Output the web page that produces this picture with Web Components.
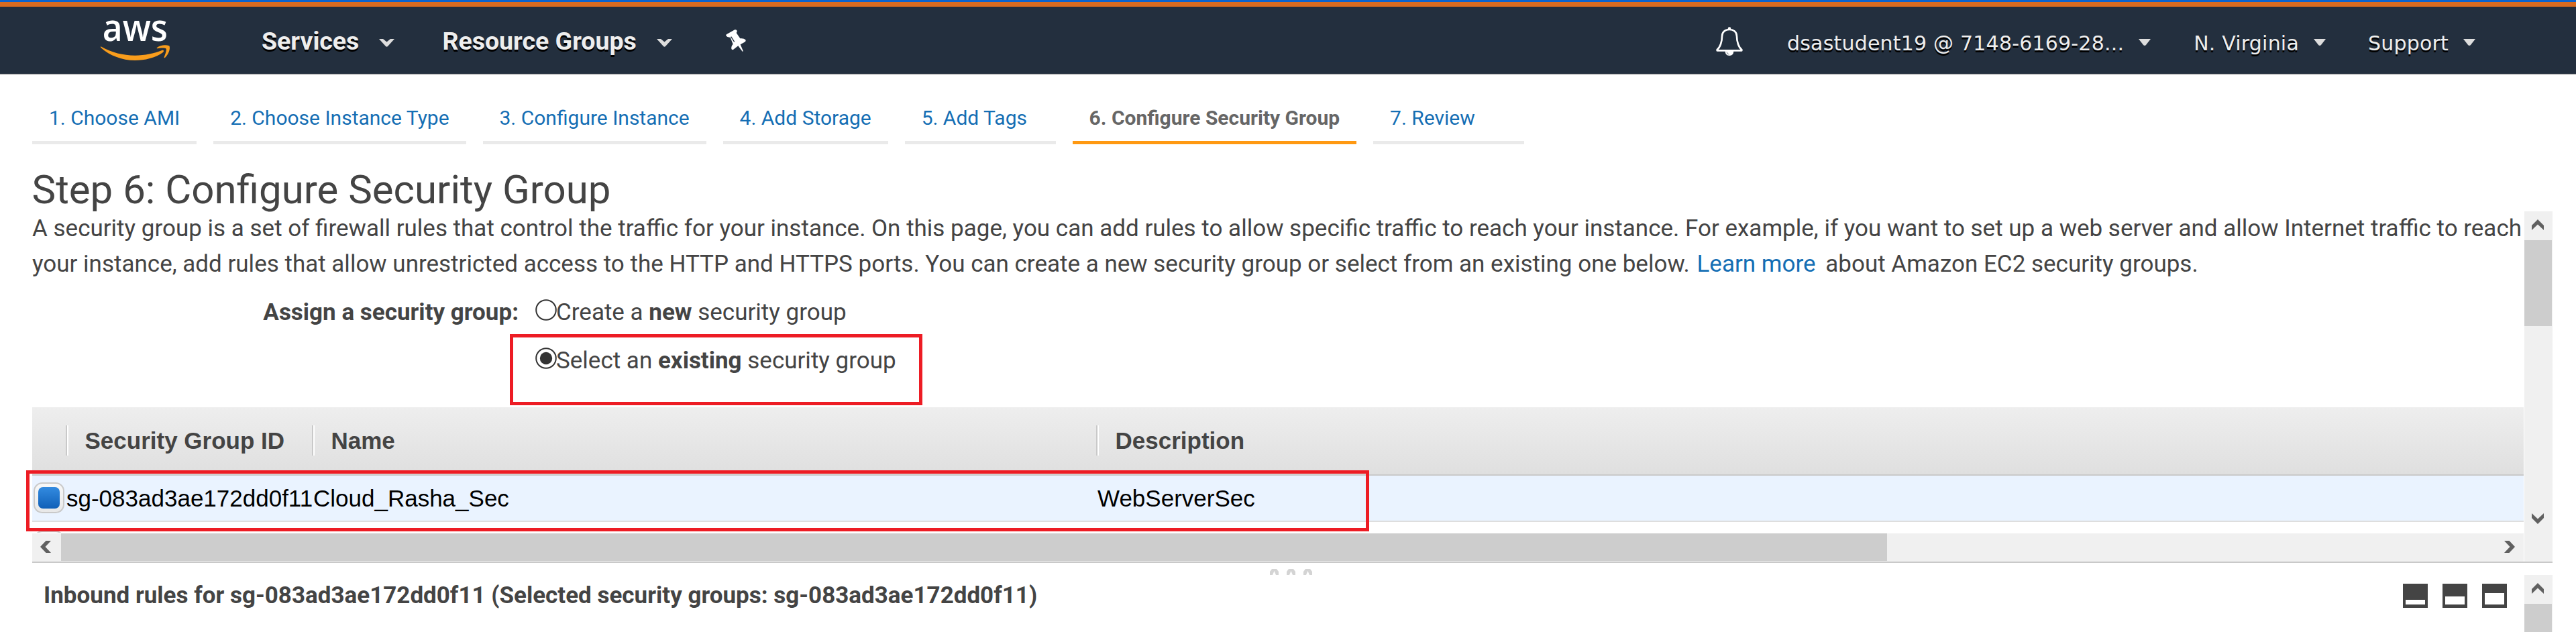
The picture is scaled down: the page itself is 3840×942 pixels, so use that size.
<!DOCTYPE html>
<html lang="en">
<head>
<meta charset="utf-8">
<title>Configure Security Group</title>
<style>
html,body{margin:0;background:#fff;overflow:hidden}
body{font-family:Roboto,"Open Sans",sans-serif;color:#444}
</style>
</head>
<body>
<launch-page></launch-page>
<script>
const define = (name, html) => customElements.define(name, class extends HTMLElement {
  connectedCallback() {
    if (this.shadowRoot) return;
    const t = document.createElement('template');
    t.innerHTML = typeof html === 'function' ? html(this) : html;
    this.attachShadow({mode: 'open'}).append(t.content.cloneNode(true));
  }
});

/* Logo: word and smile */
define('aws-logo', `<style>:host{display:block;width:160px;height:80px}svg{display:block;overflow:visible}</style>
<svg width="160" height="80" viewBox="0 0 480 240">
<text x="38" y="122" font-family="Open Sans,sans-serif" font-weight="600" font-size="170" fill="#fff" textLength="292" lengthAdjust="spacingAndGlyphs">aws</text>
<g fill="#f99d1c"><path d="M31 148C80 176 130 188 184 188C228 188 268 179 304 165C312 163 315 169 309 174C275 199 227 210 184 210C124 210 70 188 31 153Q28 148 31 148Z"/>
<path d="M281 154C295 142 320 139 337 145C344 158 332 186 318 198C314 200 313 197 315 193C320 180 326 163 323 158C317 153 297 155 284 157Q280 157 281 154Z"/></g></svg>`);

define('pin-icon', `<style>:host{display:block;width:80px;height:60px}svg{display:block}</style>
<svg width="80" height="60" viewBox="0 0 240 180"><path fill="#fff" d="M67 70Q65 65 70 63L106 43Q114 41 116 48Q117 53 113 57L130 82Q146 80 154 88Q157 95 150 98L131 109L143 137Q144 141 140 140L121 115L100 131Q93 135 91 128Q89 117 98 107L86 77Q72 78 67 70Z"/><path d="M89 74L104 97" stroke="#232f3e" stroke-width="4"/></svg>`);

define('bell-icon', `<style>:host{display:block;width:80px;height:60px}svg{display:block}</style>
<svg width="80" height="60" viewBox="0 0 240 180"><path d="M98 41Q98 31 105 31Q112 31 112 41Z" fill="#fff"/><path d="M50 136H160V132C147 122 138 98 138 72C138 52 123 42 105 42C87 42 72 52 72 72C72 98 63 122 50 132Z" fill="none" stroke="#fff" stroke-width="8" stroke-linejoin="round"/><path d="M86 138H124Q124 159 105 159Q86 159 86 138Z" fill="#fff"/><path d="M93 142Q94 152 104 153" fill="none" stroke="#232f3e" stroke-width="2"/></svg>`);

/* Menu label with its caret */
define('nav-menu', el => {
  const small = el.hasAttribute('small');
  return `<style>:host{display:flex;align-items:flex-start;height:100px;color:#eee;white-space:nowrap;text-shadow:0 2.5px 0 #000;
  font:${small ? '30px "DejaVu Sans",sans-serif' : 'bold 37.5px Roboto,sans-serif'};line-height:${small ? 109 : 102}px;letter-spacing:${small ? .2 : 0}px}
  svg{display:block;flex:none;margin:48px 0 0 ${small ? 22 : 30}px}</style><slot></slot>` + (small
  ? `<svg width="18" height="11" viewBox="0 0 18 11"><path d="M0 0H18L11 9Q9 11 7 9Z" fill="#ddd"/></svg>`
  : `<svg width="23" height="12" viewBox="0 0 23 12"><path d="M0 0H6L11.500 4.500L17 0H23L13 11Q11.500 12.500 10 11Z" fill="#ddd"/></svg>`);
});

define('top-bar', `<style>:host{display:flex;box-sizing:border-box;height:102px;background:#232f3e;border-bottom:2px solid #ccc;align-items:flex-start;padding-left:140px}
aws-logo{margin-top:10px}.pin{margin:20px 0 0 58px}.bell{margin:20px 41px 0 auto}
.a{margin-left:90px}.b{margin-left:71px}
.user{margin-right:64px}.region{margin-right:63px}.support{margin-right:150px}</style>
<aws-logo></aws-logo><nav-menu class="a">Services</nav-menu><nav-menu class="b">Resource Groups</nav-menu><pin-icon class="pin"></pin-icon>
<bell-icon class="bell"></bell-icon><nav-menu small class="user">dsastudent19 @ 7148-6169-28...</nav-menu><nav-menu small class="region">N. Virginia</nav-menu><nav-menu small class="support">Support</nav-menu>`);

define('wizard-step', `<style>:host{display:block;box-sizing:border-box;min-width:225px;height:103px;padding:30px 25px 0;border-bottom:5px solid #eaeaea;font-size:30px;line-height:68px;color:#146eb4;white-space:nowrap}
:host([active]){color:#666;font-weight:bold;border-color:#ff9912}</style><slot></slot>`);

define('wizard-steps', `<style>:host{display:flex;gap:24.900px;padding-left:48px}</style>
<wizard-step>1. Choose AMI</wizard-step><wizard-step>2. Choose Instance Type</wizard-step><wizard-step>3. Configure Instance</wizard-step><wizard-step>4. Add Storage</wizard-step><wizard-step>5. Add Tags</wizard-step><wizard-step active>6. Configure Security Group</wizard-step><wizard-step>7. Review</wizard-step>`);

/* Scroll bars with their arrow glyphs */
const up = 'M0 9L9 0L18 9V16L9 7.500L0 16Z', down = 'M0 0L9 8.500L18 0V7L9 16L0 7Z';
const left = 'M16 0H8.500L0 9L8.500 18H16L7.500 9Z', right = 'M0 0H7.500L16 9L7.500 18H0L8.500 9Z';
define('scroll-y', el => `<style>:host{display:flex;flex-direction:column;width:42px;background:#f0f0f0;overflow:hidden}
svg{display:block;margin:12px 0 15px 11px;flex:none}i{display:block;flex:none;width:41px;height:${el.getAttribute('thumb')}px;background:#cdcdcd}.d{margin:auto 0 56px 11px}</style>
<svg width="18" height="16"><path d="${up}" fill="#606060"/></svg><i></i>${el.hasAttribute('end') ? `<svg class="d" width="18" height="16"><path d="${down}" fill="#606060"/></svg>` : ''}`);
define('scroll-x', `<style>:host{display:flex;height:42px;background:#f0f0f0}
svg{display:block;margin:11px 15px 0 12px}i{display:block;width:2722px;height:41px;background:#cdcdcd}.r{margin:11px 13px 0 auto}</style>
<svg width="16" height="18"><path d="${left}" fill="#606060"/></svg><i></i><svg class="r" width="16" height="18"><path d="${right}" fill="#606060"/></svg>`);

define('radio-option', el => `<style>:host{display:flex;align-items:center;font-size:35px;line-height:72px;white-space:nowrap}
svg{display:block;margin:0 -1px 8px 0}</style>
<svg width="32" height="32"><circle cx="16" cy="16" r="14.800" fill="#fff" stroke="#333" stroke-width="2"/>${el.hasAttribute('checked') ? '<circle cx="16" cy="16" r="9.200" fill="#333"/>' : ''}</svg><span><slot></slot></span>`);

define('assign-form', `<style>:host{display:grid;box-sizing:content-box;grid-template-columns:725px auto;column-gap:25px;padding-top:10px;height:177px;align-content:start}
b{font-size:35px;line-height:72px;text-align:right}radio-option b{text-align:left}
.pick{position:relative;grid-column:2;justify-self:start}.mark{position:absolute;left:-38px;top:-4px;width:605px;height:96px;border:5px solid #ed1c24}</style>
<b>Assign a security group:</b><radio-option>Create a <b>new</b> security group</radio-option>
<div class="pick"><radio-option checked>Select an <b>existing</b> security group</radio-option><div class="mark"></div></div>`);

define('check-box', `<style>:host{display:flex;box-sizing:border-box;width:46px;height:46px;border:2px solid #c9c9c9;border-radius:13px;background:linear-gradient(#f8f8f8,#e8e8e8);align-items:center;justify-content:center}
i{width:32px;height:32px;border-radius:7px;background:linear-gradient(#338be0,#1060b8)}</style><i></i>`);

define('group-table', `<style>:host{display:block;position:relative;height:188px}
.h,.r{display:grid;grid-template-columns:50px 367px 1169px 1fr;font-family:"Liberation Sans",Arial,sans-serif;font-size:35px;white-space:nowrap}
.h{height:100px;background:linear-gradient(#eee,#dfdfdf);border-bottom:2px solid #c9c9c9;font-weight:bold}
.h span{margin-top:27px;height:45px;padding-left:26.500px;border-left:2px solid #c9c9c9;box-shadow:inset 2px 0 #fff;line-height:46px}
.r{height:67px;background:#eaf3ff;border-bottom:2px solid #dedede;line-height:68px;color:#000}
.r span{padding-left:2px}.r .id{padding-left:1px}.r .c{padding:10px 0 0 2px}
.n{height:16px;overflow:hidden}.n check-box{margin:13px 0 0 2px}
.mark{position:absolute;left:-9px;top:94px;width:1992px;height:81px;border:5px solid #ed1c24}</style>
<div class="h"><div></div><span>Security Group ID</span><span>Name</span><span>Description</span></div>
<div class="r"><div class="c"><check-box></check-box></div><span class="id">sg-083ad3ae172dd0f11</span><span>Cloud_Rasha_Sec</span><span>WebServerSec</span></div>
<div class="n"><check-box></check-box></div><div class="mark"></div>`);

define('group-panel', `<style>:host{display:grid;grid-template-columns:3714px 42px;column-gap:1px;height:522px;border-bottom:2px solid #c9c9c9;margin-left:48px;width:3757px}
p{margin:0;font-size:35px;line-height:52.500px;height:105px;white-space:nowrap}a{color:#146eb4;padding:0 6px 0 2px}
.m{display:flex;flex-direction:column}assign-form{height:177px}</style>
<div class="m"><p>A security group is a set of firewall rules that control the traffic for your instance. On this page, you can add rules to allow specific traffic to reach your instance. For example, if you want to set up a web server and allow Internet traffic to reach<br>your instance, add rules that allow unrestricted access to the HTTP and HTTPS ports. You can create a new security group or select from an existing one below. <a>Learn more</a> about Amazon EC2 security groups.</p>
<assign-form></assign-form><group-table></group-table><scroll-x></scroll-x></div>
<scroll-y thumb="128" end></scroll-y>`);

define('split-handle', `<style>:host{display:flex;gap:12px;height:18px;padding-left:1893px;align-items:flex-end;box-sizing:border-box}svg{display:block}</style>` +
`<svg width="13" height="10"><path d="M0 10V5L3 1H10L13 5V10H9L6.500 4L4 10Z" fill="#d4d4d4"/></svg>`.repeat(3));

define('pane-icon', el => `<style>:host{display:flex;box-sizing:border-box;width:37px;height:36px;background:#444;padding:0 4px 5px;align-items:flex-end}
i{width:100%;height:${el.getAttribute('open-height')}px;background:#fff}</style><i></i>`);

define('rules-panel', `<style>:host{display:grid;grid-template-columns:3698px 42px;height:85px;margin-left:65px;overflow:hidden}
div{display:flex;align-items:center;height:62px;gap:22px;padding-right:26px}h2{margin:0 auto 0 0;font-size:35px;line-height:62px;white-space:nowrap}scroll-y{height:85px}</style>
<div><h2>Inbound rules for sg-083ad3ae172dd0f11 (Selected security groups: sg-083ad3ae172dd0f11)</h2>
<pane-icon open-height="7"></pane-icon><pane-icon open-height="12"></pane-icon><pane-icon open-height="17"></pane-icon></div><scroll-y thumb="200"></scroll-y>`);

define('launch-page', `<style>:host{display:block;width:3840px;height:942px;overflow:hidden;background:#fff}
.accent{height:7px;border-top:3px solid #0b63ce;background:#d96b20}
h1{margin:0;padding:35px 0 0 47.500px;font-size:60px;font-weight:normal;line-height:65px;height:65px;white-space:nowrap}</style>
<div class="accent"></div><top-bar></top-bar><wizard-steps></wizard-steps>
<h1>Step 6: Configure Security Group</h1><group-panel></group-panel><split-handle></split-handle><rules-panel></rules-panel>`);
</script>
</body>
</html>
